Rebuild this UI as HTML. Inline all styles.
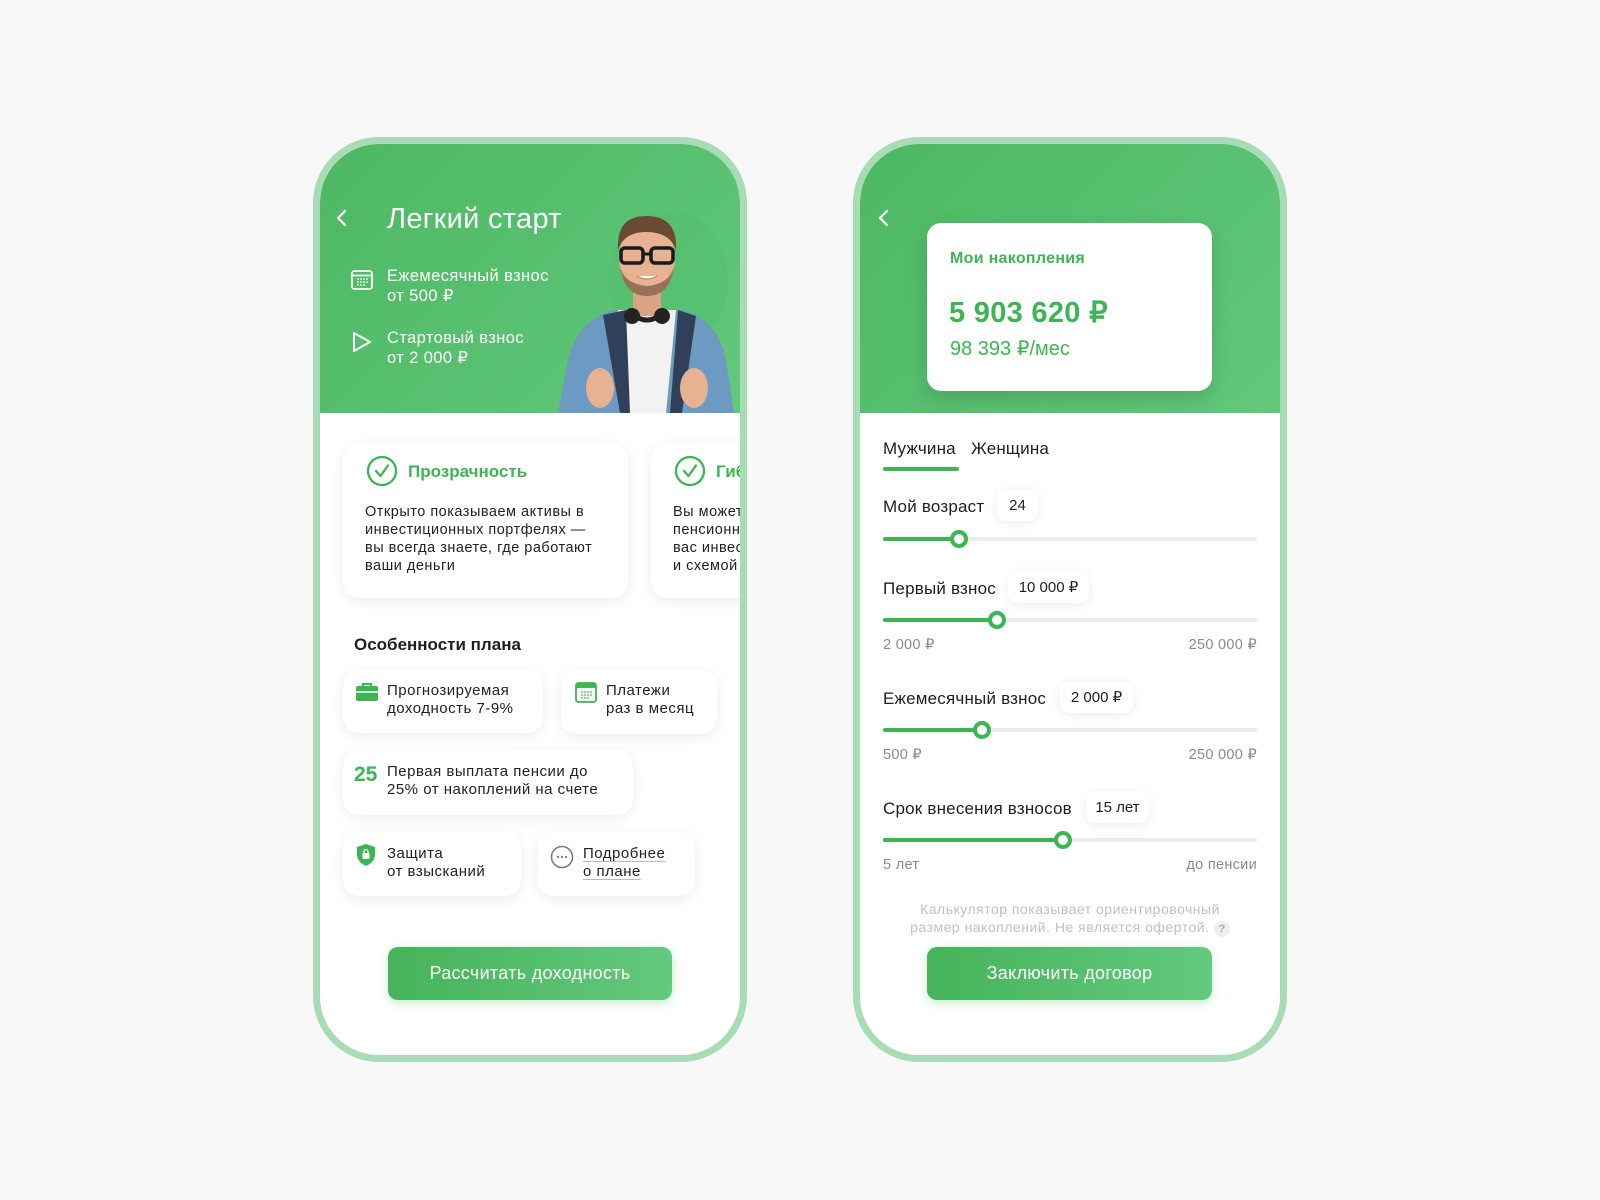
<!DOCTYPE html>
<html><head><meta charset="utf-8"><style>
*{margin:0;padding:0;box-sizing:border-box}
body{width:1600px;height:1200px;background:#f8f8f8;font-family:"Liberation Sans",sans-serif;position:relative;overflow:hidden;color:#1e1e1e}
.ph{position:absolute;top:137px;width:434px;height:925px;border:7px solid #a8dcb5;border-radius:66px;background:#fff}
.in{position:absolute;left:0;top:0;width:420px;height:911px;border-radius:59px;overflow:hidden;background:#fff}
.hd{position:absolute;left:0;top:0;width:420px;height:269px;background:linear-gradient(135deg,#4db862,#62c87d)}
.a{position:absolute;white-space:nowrap}
.card{position:absolute;background:#fff;border-radius:16px;box-shadow:0 3px 14px rgba(0,0,0,.08)}
.t14{font-size:14.5px;line-height:18px;color:#222;letter-spacing:.5px}
.t15{font-size:15px;line-height:18px;color:#222;letter-spacing:.5px}
.btn{position:absolute;border-radius:10px;background:linear-gradient(90deg,#46b35a,#63c97e);color:#fff;font-size:18px;letter-spacing:.3px;text-align:center;line-height:53px;box-shadow:0 3px 10px rgba(70,180,90,.3)}
.lbl{font-size:17px;letter-spacing:.2px;color:#1e1e1e}
.badge{position:absolute;background:#fff;border-radius:9px;box-shadow:0 2px 10px rgba(0,0,0,.08);font-size:15px;text-align:center;line-height:34px;height:32px}
.tr{position:absolute;left:23px;width:374px;height:4px;border-radius:2px;background:#ececec}
.fl{position:absolute;left:0;top:0;height:4px;border-radius:2px;background:#3cb552}
.th{position:absolute;top:-7px;width:18px;height:18px;border-radius:50%;background:#fff;border:4px solid #3cb552}
.gr{font-size:14.5px;letter-spacing:.3px;color:#8a8a8a}
</style></head><body>

<!-- LEFT PHONE -->
<div class="ph" style="left:313px">
<div class="in">
<div class="hd"></div>
<svg class="a" style="left:12px;top:64px" width="20" height="20" viewBox="0 0 20 20"><path d="M13 3 L6 10 L13 17" fill="none" stroke="#fff" stroke-width="2.2" stroke-linecap="round" stroke-linejoin="round"/></svg>
<div class="a" style="left:67px;top:59px;font-size:29px;letter-spacing:.3px;color:#fff">Легкий старт</div>
<svg class="a" style="left:31px;top:125px" width="22" height="21" viewBox="0 0 22 21"><rect x="1" y="2" width="20" height="18" rx="2.5" fill="none" stroke="#fff" stroke-width="1.8"/><line x1="1" y1="6.5" x2="21" y2="6.5" stroke="#fff" stroke-width="1.8"/><g fill="#fff"><circle cx="7" cy="10" r=".9"/><circle cx="10" cy="10" r=".9"/><circle cx="13" cy="10" r=".9"/><circle cx="16" cy="10" r=".9"/><circle cx="7" cy="13" r=".9"/><circle cx="10" cy="13" r=".9"/><circle cx="13" cy="13" r=".9"/><circle cx="16" cy="13" r=".9"/><circle cx="7" cy="16" r=".9"/><circle cx="10" cy="16" r=".9"/><circle cx="13" cy="16" r=".9"/></g></svg>
<div class="a" style="left:67px;top:122px;font-size:16.5px;letter-spacing:.4px;line-height:20px;color:#fff">Ежемесячный взнос<br>от 500 ₽</div>
<svg class="a" style="left:31px;top:187px" width="22" height="22" viewBox="0 0 22 22"><path d="M3 2 L19 11 L3 20 Z" fill="none" stroke="#fff" stroke-width="2" stroke-linejoin="round"/></svg>
<div class="a" style="left:67px;top:184px;font-size:16.5px;letter-spacing:.4px;line-height:20px;color:#fff">Стартовый взнос<br>от 2 000 ₽</div>
<!-- person -->
<svg class="a" style="left:238px;top:66px" width="182" height="203" viewBox="0 0 182 203">
<ellipse cx="110" cy="70" rx="60" ry="70" fill="#55be6e" opacity=".6"/>
<path d="M0 203 L10 150 Q20 110 55 100 L125 100 Q160 110 168 150 L176 203 Z" fill="#6d9ac2"/>
<path d="M60 100 L70 203 L108 203 L118 100 Z" fill="#f2f2f2"/>
<path d="M45 105 L62 203 L72 203 L68 100 Z" fill="#2f4058"/>
<path d="M120 100 L112 203 L124 203 L138 106 Z" fill="#2f4058"/>
<rect x="75" y="80" width="28" height="26" fill="#d9a384"/>
<ellipse cx="89" cy="48" rx="28" ry="36" fill="#e6b292"/>
<path d="M60 40 Q58 6 88 6 Q120 6 118 40 Q112 22 88 22 Q66 22 60 40 Z" fill="#6b4a33"/>
<path d="M62 56 Q66 86 89 86 Q112 86 116 56 Q112 74 89 76 Q66 74 62 56 Z" fill="#9a7158"/>
<rect x="63" y="38" width="22" height="15" rx="4" fill="none" stroke="#1b1b1b" stroke-width="3.5"/>
<rect x="93" y="38" width="22" height="15" rx="4" fill="none" stroke="#1b1b1b" stroke-width="3.5"/>
<line x1="85" y1="44" x2="93" y2="44" stroke="#1b1b1b" stroke-width="3"/>
<path d="M79 66 Q89 72 99 66" fill="#fff" stroke="#b0705a" stroke-width="1"/>
<path d="M70 100 Q89 120 108 100" fill="none" stroke="#222" stroke-width="5"/>
<circle cx="74" cy="106" r="8" fill="#222"/><circle cx="104" cy="106" r="8" fill="#222"/>
<ellipse cx="42" cy="178" rx="14" ry="20" fill="#e6b292"/>
<ellipse cx="136" cy="178" rx="14" ry="20" fill="#e6b292"/>
</svg>

<div class="card" style="left:23px;top:299px;width:285px;height:155px"></div>
<svg class="a" style="left:46px;top:311px" width="32" height="32" viewBox="0 0 32 32"><circle cx="16" cy="16" r="14" fill="none" stroke="#3cb552" stroke-width="2.3"/><path d="M10 16 L14.5 21 L22 10.5" fill="none" stroke="#3cb552" stroke-width="2.3" stroke-linecap="round" stroke-linejoin="round"/></svg>
<div class="a" style="left:88px;top:318px;font-size:17px;font-weight:bold;color:#3cb552">Прозрачность</div>
<div class="a t14" style="left:45px;top:359px">Открыто показываем активы в<br>инвестиционных портфелях —<br>вы всегда знаете, где работают<br>ваши деньги</div>
<div class="card" style="left:331px;top:299px;width:285px;height:155px"></div>
<svg class="a" style="left:354px;top:311px" width="32" height="32" viewBox="0 0 32 32"><circle cx="16" cy="16" r="14" fill="none" stroke="#3cb552" stroke-width="2.3"/><path d="M10 16 L14.5 21 L22 10.5" fill="none" stroke="#3cb552" stroke-width="2.3" stroke-linecap="round" stroke-linejoin="round"/></svg>
<div class="a" style="left:396px;top:318px;font-size:17px;font-weight:bold;color:#3cb552">Гибкость</div>
<div class="a t14" style="left:353px;top:359px">Вы можете выбрать<br>пенсионный план<br>вас инвестиционной<br>и схемой</div>

<div class="a" style="left:34px;top:491px;font-size:17px;font-weight:bold;color:#1e1e1e">Особенности плана</div>

<div class="card" style="left:23px;top:526px;width:200px;height:63px"></div>
<svg class="a" style="left:36px;top:538px" width="22" height="20" viewBox="0 0 22 20"><path d="M7 4 V2 H15 V4" fill="none" stroke="#3cb552" stroke-width="2"/><rect x="0" y="4" width="22" height="15" rx="2" fill="#3cb552"/><line x1="0" y1="10" x2="22" y2="10" stroke="#fff" stroke-width="1.5"/></svg>
<div class="a t15" style="left:67px;top:538px">Прогнозируемая<br>доходность 7-9%</div>

<div class="card" style="left:241px;top:526px;width:156px;height:64px"></div>
<svg class="a" style="left:255px;top:538px" width="22" height="21" viewBox="0 0 22 21"><rect x="1" y="1" width="20" height="19" rx="2.5" fill="none" stroke="#3cb552" stroke-width="1.8"/><rect x="1" y="1" width="20" height="5" fill="#3cb552"/><g fill="#3cb552"><circle cx="7" cy="10" r=".9"/><circle cx="10" cy="10" r=".9"/><circle cx="13" cy="10" r=".9"/><circle cx="16" cy="10" r=".9"/><circle cx="7" cy="13" r=".9"/><circle cx="10" cy="13" r=".9"/><circle cx="13" cy="13" r=".9"/><circle cx="16" cy="13" r=".9"/><circle cx="7" cy="16" r=".9"/><circle cx="10" cy="16" r=".9"/><circle cx="13" cy="16" r=".9"/></g></svg>
<div class="a t15" style="left:286px;top:538px">Платежи<br>раз в месяц</div>

<div class="card" style="left:23px;top:606px;width:290px;height:65px"></div>
<div class="a" style="left:34px;top:619px;font-size:21px;font-weight:bold;color:#3cb552">25</div>
<div class="a t15" style="left:67px;top:619px">Первая выплата пенсии до<br>25% от накоплений на счете</div>

<div class="card" style="left:23px;top:688px;width:178px;height:64px"></div>
<svg class="a" style="left:37px;top:700px" width="18" height="22" viewBox="0 0 18 22"><path d="M9 0 L18 3 V10 Q18 18 9 22 Q0 18 0 10 V3 Z" fill="#3cb552"/><rect x="5.5" y="9" width="7" height="6" rx="1" fill="#fff"/><path d="M7 9 V7.5 A2 2 0 0 1 11 7.5 V9" fill="none" stroke="#fff" stroke-width="1.3"/></svg>
<div class="a t15" style="left:67px;top:701px">Защита<br>от взысканий</div>

<div class="card" style="left:218px;top:688px;width:157px;height:64px"></div>
<svg class="a" style="left:230px;top:701px" width="24" height="24" viewBox="0 0 24 24"><circle cx="12" cy="12" r="10.5" fill="none" stroke="#777" stroke-width="1.5"/><circle cx="8" cy="12" r="1.1" fill="#777"/><circle cx="12" cy="12" r="1.1" fill="#777"/><circle cx="16" cy="12" r="1.1" fill="#777"/></svg>
<div class="a t15" style="left:263px;top:701px;text-decoration:underline;text-decoration-color:#bbb;text-underline-offset:3px">Подробнее<br>о плане</div>

<div class="btn" style="left:68px;top:803px;width:284px;height:53px">Рассчитать доходность</div>
</div></div>

<!-- RIGHT PHONE -->
<div class="ph" style="left:853px">
<div class="in">
<div class="hd"></div>
<svg class="a" style="left:14px;top:64px" width="20" height="20" viewBox="0 0 20 20"><path d="M13 3 L6 10 L13 17" fill="none" stroke="#fff" stroke-width="2.2" stroke-linecap="round" stroke-linejoin="round"/></svg>
<div class="card" style="left:67px;top:79px;width:285px;height:168px;border-radius:14px;box-shadow:0 8px 22px rgba(0,0,0,.15)"></div>
<div class="a" style="left:90px;top:106px;font-size:16px;letter-spacing:.3px;font-weight:bold;color:#3cb552">Мои накопления</div>
<div class="a" style="left:89px;top:151px;font-size:29px;letter-spacing:.3px;font-weight:bold;color:#3cb552">5 903 620 ₽</div>
<div class="a" style="left:90px;top:192px;font-size:20px;color:#3cb552">98 393 ₽/мес</div>

<div class="a lbl" style="left:23px;top:295px">Мужчина</div>
<div class="a lbl" style="left:111px;top:295px">Женщина</div>
<div class="a" style="left:23px;top:323px;width:76px;height:4px;border-radius:2px;background:#3cb552"></div>

<div class="a lbl" style="left:23px;top:353px">Мой возраст</div>
<div class="badge" style="left:137px;top:345px;width:41px">24</div>
<div class="tr" style="top:393px"><div class="fl" style="width:76px"></div><div class="th" style="left:67px"></div></div>

<div class="a lbl" style="left:23px;top:435px">Первый взнос</div>
<div class="badge" style="left:148px;top:427px;width:81px">10 000 ₽</div>
<div class="tr" style="top:474px"><div class="fl" style="width:114px"></div><div class="th" style="left:105px"></div></div>
<div class="a gr" style="left:23px;top:493px">2 000 ₽</div>
<div class="a gr" style="right:23px;top:493px">250 000 ₽</div>

<div class="a lbl" style="left:23px;top:545px">Ежемесячный взнос</div>
<div class="badge" style="left:200px;top:537px;width:73px">2 000 ₽</div>
<div class="tr" style="top:584px"><div class="fl" style="width:99px"></div><div class="th" style="left:90px"></div></div>
<div class="a gr" style="left:23px;top:603px">500 ₽</div>
<div class="a gr" style="right:23px;top:603px">250 000 ₽</div>

<div class="a lbl" style="left:23px;top:655px">Срок внесения взносов</div>
<div class="badge" style="left:226px;top:647px;width:63px">15 лет</div>
<div class="tr" style="top:694px"><div class="fl" style="width:180px"></div><div class="th" style="left:171px"></div></div>
<div class="a gr" style="left:23px;top:713px">5 лет</div>
<div class="a gr" style="right:23px;top:713px">до пенсии</div>

<div class="a" style="left:0;width:420px;top:756px;text-align:center;font-size:14px;letter-spacing:.5px;line-height:18px;color:#c0c0c0">Калькулятор показывает ориентировочный<br>размер накоплений. Не является офертой. <span style="display:inline-block;width:16px;height:16px;border-radius:50%;background:#efefef;color:#aaa;font-size:11px;line-height:16px;letter-spacing:0;font-weight:bold">?</span></div>

<div class="btn" style="left:67px;top:803px;width:285px;height:53px">Заключить договор</div>
</div></div>
</body></html>
